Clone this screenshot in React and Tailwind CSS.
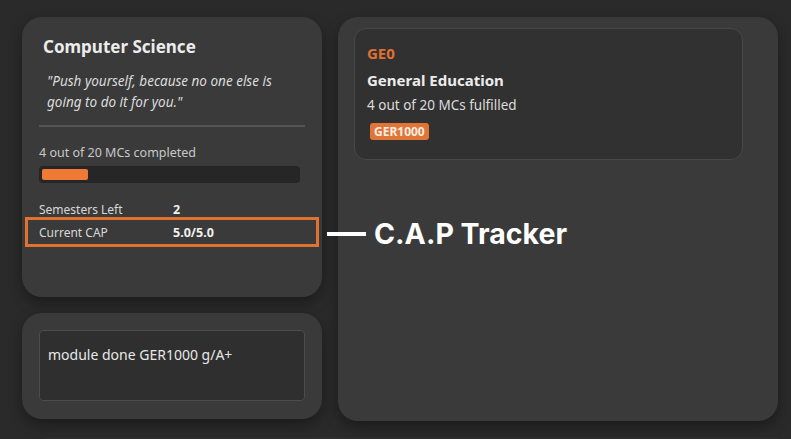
import React from "react";

export default function App() {
  const font = { fontFamily: '"Noto Sans", "Open Sans", sans-serif' };
  return (
    <div className="relative w-[791px] h-[439px] overflow-hidden bg-[#2a2a2a] text-[#e8e8e8]" style={font}>
      <div className="flex gap-4 pl-[22px] pt-[17px]">
        <div className="flex flex-col gap-4 w-[300px]">
          <div className="h-[280px] rounded-[20px] bg-[#3a3a3a] shadow-[0_6px_14px_rgba(0,0,0,0.35)] px-[17px] pt-[19px]">
            <div className="pl-1 text-[17px] font-bold leading-[22px] text-[#ececec]">Computer Science</div>
            <div className="pl-2 pr-3 mt-[13px] text-[13.5px] italic leading-[21px] text-[#dcdcdc]">
              "Push yourself, because no one else is going to do it for you."
            </div>
            <div className="mt-[12px] h-[2px] bg-[#555555]" />
            <div className="mt-[17px] text-[12.5px] leading-[18px] text-[#c8c8c8]">4 out of 20 MCs completed</div>
            <div className="mt-[4px] mr-[5px] h-[17px] rounded-[4px] bg-[#262626] p-[3px]">
              <div className="h-[11px] w-[46px] rounded-[2px] bg-[#ef7a35]" />
            </div>
            <div className="mt-[18px] flex text-[12px] leading-[18px]">
              <div className="w-[134px] text-[#d8d8d8]">Semesters Left</div>
              <div className="font-bold text-[#f0f0f0] text-[12.5px]">2</div>
            </div>
            <div className="mt-[5px] flex text-[12px] leading-[18px]">
              <div className="w-[134px] text-[#d8d8d8]">Current CAP</div>
              <div className="font-bold text-[#f0f0f0] text-[12.5px]">5.0/5.0</div>
            </div>
          </div>
          <div className="h-[106px] rounded-[20px] bg-[#3a3a3a] shadow-[0_6px_14px_rgba(0,0,0,0.35)] px-[17px] pt-[17px]">
            <div className="h-[71px] rounded-[4px] border border-[#4c4c4c] bg-[#2f2f2f] px-[8px] pt-[14px] text-[14px] leading-[20px] text-[#e8e8e8]">
              module done GER1000 g/A+
            </div>
          </div>
        </div>
        <div className="w-[440px] h-[404px] rounded-[20px] bg-[#3a3a3a] shadow-[0_6px_14px_rgba(0,0,0,0.35)] pl-[16px] pt-[11px]">
          <div className="w-[389px] h-[132px] rounded-[12px] border border-[#484848] bg-[#313131] px-[12px] pt-[14px]">
            <div className="text-[15px] font-bold leading-[20px] text-[#e0702f]">GE0</div>
            <div className="mt-[7px] text-[15px] font-bold leading-[20px] text-[#ececec]">General Education</div>
            <div className="mt-[6px] text-[13.5px] leading-[18px] text-[#dcdcdc]">4 out of 20 MCs fulfilled</div>
            <div className="mt-[9px] ml-[3px] inline-block rounded-[3px] bg-[#e07535] px-[4px] text-[12px] font-bold leading-[17px] text-[#fbeee5]">GER1000</div>
          </div>
        </div>
      </div>
      <div className="mt-[16px] ml-[30px] h-[30px] rounded-t-[20px] bg-[#2e2e2e]" />
      <div className="absolute left-[25px] top-[217px] w-[294px] h-[30px] border-[3px] border-[#e0722f]" />
      <div className="absolute left-[327px] top-[232px] w-[39px] h-[4px] bg-white" />
      <div className="absolute left-[374px] top-[215px] text-[28.5px] font-bold leading-[38px] text-white" style={{ fontFamily: 'Inter, "Noto Sans", sans-serif' }}>
        C.A.P Tracker
      </div>
    </div>
  );
}
